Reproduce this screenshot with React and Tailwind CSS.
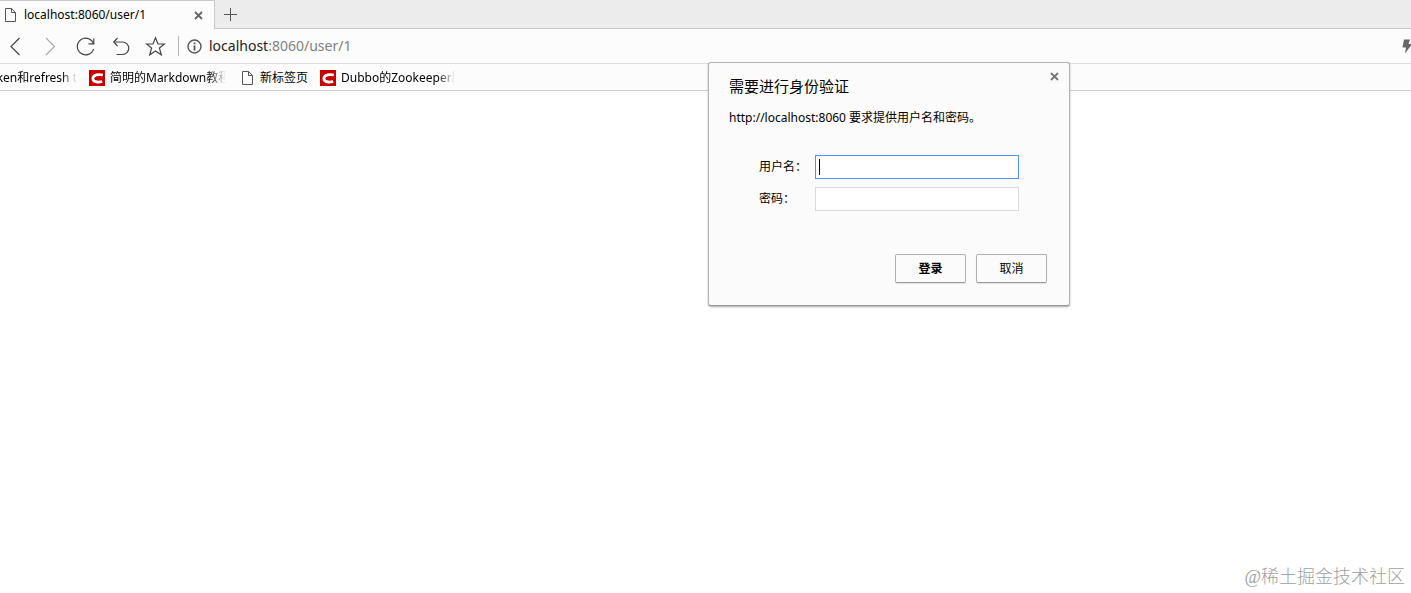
import React, { useState } from "react";

function PageIcon() {
  return (
    <svg width="14" height="14" viewBox="0 0 14 14" fill="none" stroke="#555" className="shrink-0">
      <path d="M1.500 .5H7.500L11.500 4.500V13.500H1.500Z" />
      <path d="M7.500 .5V4.500H11.500" />
    </svg>
  );
}

function CsdnIcon() {
  return (
    <svg width="16" height="16" viewBox="0 0 16 16" className="shrink-0">
      <rect width="16" height="16" fill="#c90000" />
      <path
        d="M13.800 5C12 4.500 9.500 4.400 7.500 4.900C5 5.500 3.800 7 3.900 8.700C4 10.900 5.700 11.900 8.300 12C10.200 12.100 11.900 11.900 13.200 11.500"
        fill="none"
        stroke="#fff"
        strokeWidth="2.800"
      />
    </svg>
  );
}

function CloseIcon({ size = 9, color = "#666" }) {
  return (
    <svg width={size} height={size} viewBox="0 0 9 9" fill="none" stroke={color} strokeWidth="1.800">
      <path d="M1 1L8 8M8 1L1 8" />
    </svg>
  );
}

const navButtons = [
  { name: "后退", color: "#444", paths: ["M14.500 2L6 10.500L14.500 19"] },
  { name: "前进", color: "#aaa", paths: ["M6 2L14.500 10.500L6 19"] },
  {
    name: "刷新",
    color: "#444",
    paths: ["M18.600 8.200A8.300 8.300 0 1 0 18.600 12.800", "M18.800 2.500V7.800H13.500"],
  },
  {
    name: "恢复",
    color: "#444",
    paths: ["M4 6H12.500A6.200 6.200 0 0 1 12.500 18.500H6.500", "M7.500 2L3.800 6L7.500 10"],
  },
  {
    name: "收藏",
    color: "#444",
    paths: [
      "M10.500 1.800L13 8H19.500L14.400 12L16.300 18.800L10.500 14.900L4.700 18.800L6.600 12L1.500 8H8Z",
    ],
  },
];

const bookmarks = [
  { title: "简明的Markdown教程", icon: <CsdnIcon />, width: "w-[140px]", fade: true },
  { title: "新标签页", icon: <PageIcon />, width: "w-[67px]", fade: false },
  { title: "Dubbo的Zookeeper服务", icon: <CsdnIcon />, width: "w-[138px]", fade: true },
];

function TabBar() {
  return (
    <div className="flex h-[29px] bg-[#ececec]">
      <div className="flex w-[215px] items-center border-t border-r border-[#c8c8c8] bg-[#fcfcfc] pl-1">
        <PageIcon />
        <span className="ml-[6px] flex-1 text-xs text-black">localhost:8060/user/1</span>
        <button aria-label="关闭标签页" className="mr-[11px]">
          <CloseIcon />
        </button>
      </div>
      <div className="flex flex-1 items-center border-b border-[#c8c8c8] pl-2">
        <button aria-label="新建标签页">
          <svg width="15" height="15" viewBox="0 0 15 15" stroke="#555" className="mt-px">
            <path d="M7.500 1V14M1 7.500H14" />
          </svg>
        </button>
      </div>
    </div>
  );
}

function Toolbar() {
  return (
    <div className="flex h-[35px] items-center border-b border-[#dedede] bg-[#fcfcfc] pl-[5px]">
      <div className="flex gap-[14px]">
        {navButtons.map((item) => (
          <button key={item.name} aria-label={item.name}>
            <svg width="21" height="21" viewBox="0 0 21 21" fill="none" stroke={item.color} strokeWidth="1.200">
              {item.paths.map((d) => (
                <path key={d} d={d} />
              ))}
            </svg>
          </button>
        ))}
      </div>
      <div className="ml-3 h-5 w-px bg-[#b5b5b5]" />
      <svg width="15" height="15" viewBox="0 0 15 15" fill="none" stroke="#555" strokeWidth="1.400" className="ml-2">
        <circle cx="7.500" cy="7.500" r="6.500" />
        <path d="M7.500 6.500V11.500M7.500 3.500V5.200" strokeWidth="1.800" />
      </svg>
      <div className="ml-[7px] flex-1 text-sm text-[#808080]">
        <span className="text-[#222]">localhost</span>:8060/user/1
      </div>
      <svg width="9" height="15" viewBox="0 0 9 15" fill="#666">
        <path d="M2 .5H8L6.500 5H9V6.500L3 14.500L4 8.500H.5Z" />
      </svg>
    </div>
  );
}

function BookmarksBar() {
  return (
    <div className="flex h-[27px] items-center overflow-hidden border-b border-[#d0d0d0] bg-[#fcfcfc] pt-px text-xs text-black">
      <a
        href="#token"
        className="flex w-[77px] justify-end overflow-hidden whitespace-nowrap mask-r-from-80% mask-r-to-100%"
      >
        token和refresh t
      </a>
      <div className="ml-3 flex gap-3">
        {bookmarks.map((item) => (
          <a
            key={item.title}
            href="#bookmark"
            className={`flex items-center gap-[5px] overflow-hidden whitespace-nowrap ${item.width} ${
              item.fade ? "mask-r-from-85% mask-r-to-98%" : ""
            }`}
          >
            {item.icon}
            <span>{item.title}</span>
          </a>
        ))}
      </div>
    </div>
  );
}

function LoginDialog({ onClose }) {
  const [username, setUsername] = useState("");
  const [password, setPassword] = useState("");

  return (
    <div
      role="dialog"
      aria-labelledby="auth-title"
      className="absolute top-[62px] right-[341px] w-[362px] rounded-[3px] border border-[#b4b4b4] border-b-[#999] bg-[#fbfbfb] pt-[11px] pr-[22px] pb-[22px] pl-5 text-xs text-black shadow-[0_1px_2px_rgba(0,0,0,0.35)]"
    >
      <button aria-label="关闭" onClick={onClose} className="absolute top-[9px] right-[10px]">
        <CloseIcon color="#777" />
      </button>
      <h1 id="auth-title" className="text-[15px] leading-6">
        需要进行身份验证
      </h1>
      <p className="mt-[10px] leading-5">http://localhost:8060 要求提供用户名和密码。</p>
      <form onSubmit={(e) => e.preventDefault()}>
        <div className="mt-[27px] flex flex-col gap-2 pl-[30px]">
          <div className="flex items-center">
            <label htmlFor="username" className="w-14 leading-6">
              用户名：
            </label>
            <div className="relative">
              <input
                id="username"
                value={username}
                onChange={(e) => setUsername(e.target.value)}
                className="block h-6 w-[204px] border border-[#4d90fe] bg-white px-1 caret-transparent outline-none"
              />
              <span className="absolute top-1 left-1 h-4 w-px bg-black" />
            </div>
          </div>
          <div className="flex items-center">
            <label htmlFor="password" className="w-14 leading-6">
              密码：
            </label>
            <input
              id="password"
              type="password"
              value={password}
              onChange={(e) => setPassword(e.target.value)}
              className="block h-6 w-[204px] border border-[#d9d9d9] bg-white px-1 outline-none"
            />
          </div>
        </div>
        <div className="mt-[43px] flex justify-end gap-[10px]">
          <button
            type="submit"
            className="h-[29px] w-[71px] rounded-[2px] border border-[#b0b0b0] border-b-[#999] font-bold shadow-[0_1px_1px_rgba(0,0,0,0.1)]"
          >
            登录
          </button>
          <button
            type="button"
            onClick={onClose}
            className="h-[29px] w-[71px] rounded-[2px] border border-[#b0b0b0] border-b-[#999] shadow-[0_1px_1px_rgba(0,0,0,0.1)]"
          >
            取消
          </button>
        </div>
      </form>
    </div>
  );
}

export default function App() {
  const [showDialog, setShowDialog] = useState(true);

  return (
    <div className="relative flex min-h-screen flex-col overflow-hidden bg-white font-['Noto_Sans','Noto_Sans_CJK_SC',sans-serif]">
      <TabBar />
      <Toolbar />
      <BookmarksBar />
      <main className="flex flex-1 items-end justify-end">
        <p className="pr-[6px] pb-1 font-['Liberation_Serif','Noto_Sans_CJK_SC',serif] text-lg leading-6 font-light text-[#a0a0a0]">
          @稀土掘金技术社区
        </p>
      </main>
      {showDialog && <LoginDialog onClose={() => setShowDialog(false)} />}
    </div>
  );
}
